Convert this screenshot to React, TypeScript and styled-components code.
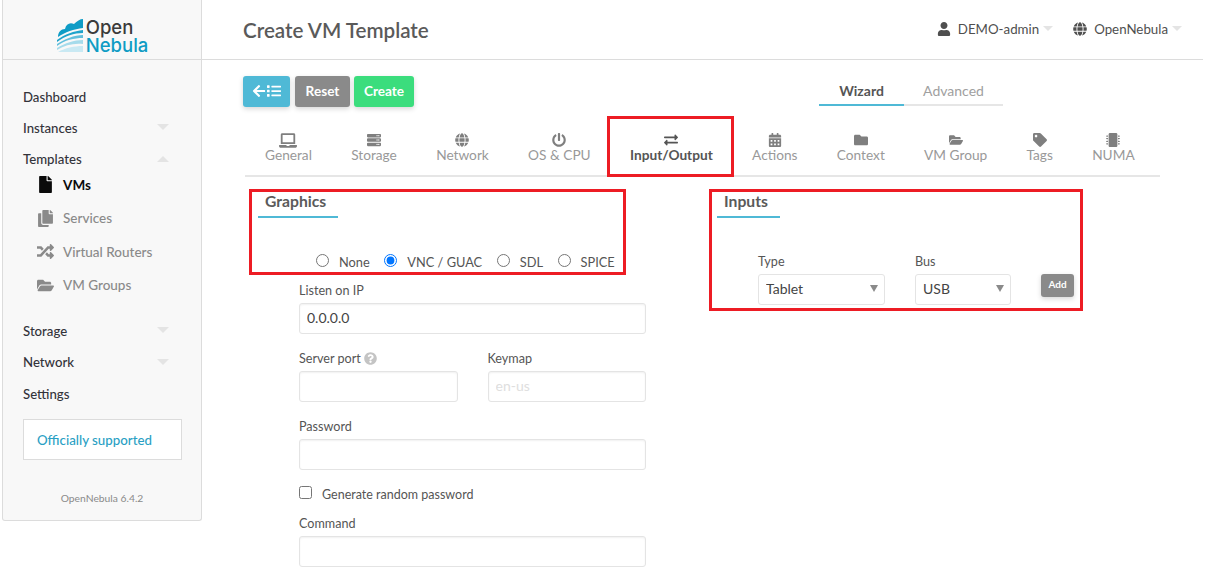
import styled, { createGlobalStyle } from "styled-components"
import {
	FaArrowLeft,
	FaCalendarAlt,
	FaCopy,
	FaExchangeAlt,
	FaFile,
	FaFolder,
	FaFolderOpen,
	FaGlobe,
	FaLaptop,
	FaList,
	FaMicrochip,
	FaPowerOff,
	FaQuestionCircle,
	FaRandom,
	FaServer,
	FaTag,
	FaUser
} from "react-icons/fa"

// Components //

export default function App() {
	return (
		<>
			<GlobalStyle />
			<Page>
				<Sidebar>
					<LogoBar>
						<LogoMark viewBox="0 0 27 33">
							<path
								d="M1 18 C1 13 4 10 8 10 C9 5 13 3 17 5 C20 2 23 0 26 0 L26 9 C17 10 8 13 1 18 Z"
								fill="#0e9cc6"
							/>
							<path d="M0 21 C8 15 17 12 26 11 L26 14 C17 14 8 17 0 23 Z" fill="#1fa3cb" />
							<path d="M0 25 C8 20 17 16 26 16 L26 19 C17 19 8 21 0 27 Z" fill="#62bfdc" />
							<path d="M0 29 C8 24 17 21 26 21 L26 25 C17 24 8 26 0 31 Z" fill="#a5dbeb" />
							<path d="M1 33 C8 29 17 27 26 27 L26 33 Z" fill="#c9e9f3" />
						</LogoMark>
						<LogoWords>
							<LogoOpen>Open</LogoOpen>
							<LogoNebula>Nebula</LogoNebula>
						</LogoWords>
					</LogoBar>
					<Nav>
						<NavItem>Dashboard</NavItem>
						<NavItem>
							Instances
							<Caret />
						</NavItem>
						<NavItem>
							Templates
							<Caret $up />
						</NavItem>
						<SubMenu>
							<SubItem $active>
								<SubIcon>
									<FaFile />
								</SubIcon>
								VMs
							</SubItem>
							<SubItem>
								<SubIcon>
									<FaCopy />
								</SubIcon>
								Services
							</SubItem>
							<SubItem>
								<SubIcon>
									<FaRandom />
								</SubIcon>
								Virtual Routers
							</SubItem>
							<SubItem>
								<SubIcon>
									<FaFolderOpen />
								</SubIcon>
								VM Groups
							</SubItem>
						</SubMenu>
						<NavItem>
							Storage
							<Caret />
						</NavItem>
						<NavItem>
							Network
							<Caret />
						</NavItem>
						<NavItem>Settings</NavItem>
					</Nav>
					<SupportBox>Officially supported</SupportBox>
					<Version>OpenNebula 6.4.2</Version>
				</Sidebar>

				<Main>
					<Header>
						<Title>Create VM Template</Title>
						<UserMenu>
							<UserEntry>
								<FaUser />
								DEMO-admin
								<SmallCaret />
							</UserEntry>
							<UserEntry>
								<FaGlobe />
								OpenNebula
								<SmallCaret />
							</UserEntry>
						</UserMenu>
					</Header>

					<Content>
						<Toolbar>
							<ButtonGroup>
								<ActionButton $color="#4fb9d6" $width={47}>
									<BackIcons>
										<FaArrowLeft />
										<FaList />
									</BackIcons>
								</ActionButton>
								<ActionButton $color="#8a8a8a" $width={55}>
									Reset
								</ActionButton>
								<CreateButton $color="#3bdd7d" $width={60}>
									Create
								</CreateButton>
							</ButtonGroup>
							<ModeTabs>
								<ModeTab $active $width={85}>
									Wizard
								</ModeTab>
								<ModeTab $width={99}>Advanced</ModeTab>
							</ModeTabs>
						</Toolbar>

						<TabBar>
							{tabs.map((tab) => (
								<Tab key={tab.label} $active={tab.active}>
									<TabIcon $active={tab.active}>{tab.icon}</TabIcon>
									{tab.label}
								</Tab>
							))}
						</TabBar>

						<FormColumns>
							<GraphicsColumn>
								<SectionTitle>Graphics</SectionTitle>
								<RadioRow>
									{radios.map((radio) => (
										<RadioLabel key={radio.label}>
											<input type="radio" name="graphics" defaultChecked={radio.checked} />
											<span>{radio.label}</span>
										</RadioLabel>
									))}
								</RadioRow>
								<Fields>
									<Field>
										<FieldLabel>Listen on IP</FieldLabel>
										<TextInput defaultValue="0.0.0.0" />
									</Field>
									<FieldPair>
										<Field>
											<FieldLabel>
												Server port <HelpIcon />
											</FieldLabel>
											<TextInput />
										</Field>
										<Field>
											<FieldLabel>Keymap</FieldLabel>
											<TextInput placeholder="en-us" />
										</Field>
									</FieldPair>
									<Field>
										<FieldLabel>Password</FieldLabel>
										<TextInput />
									</Field>
									<CheckRow>
										<input type="checkbox" />
										<span>Generate random password</span>
									</CheckRow>
									<Field>
										<FieldLabel>Command</FieldLabel>
										<TextInput />
									</Field>
								</Fields>
							</GraphicsColumn>

							<InputsColumn>
								<SectionTitle>Inputs</SectionTitle>
								<InputsRow>
									<InputField>
										<FieldLabel>Type</FieldLabel>
										<SelectWrap $width={127}>
											<Select defaultValue="Tablet">
												<option>Tablet</option>
												<option>Mouse</option>
											</Select>
										</SelectWrap>
									</InputField>
									<InputField>
										<FieldLabel>Bus</FieldLabel>
										<SelectWrap $width={96}>
											<Select defaultValue="USB">
												<option>USB</option>
												<option>PS2</option>
											</Select>
										</SelectWrap>
									</InputField>
									<AddButton>Add</AddButton>
								</InputsRow>
							</InputsColumn>
						</FormColumns>
					</Content>
				</Main>

				<Callout $left={607} $top={116} $width={127} $height={61} />
				<Callout $left={249} $top={189} $width={377} $height={86} />
				<Callout $left={709} $top={189} $width={374} $height={122} />
			</Page>
		</>
	)
}

// Styled Components //

const GlobalStyle = createGlobalStyle`
	html, body {
		margin: 0;
		height: 100%;
		background: #fff;
		overflow: hidden;
	}
	body {
		font-family: Lato, "Liberation Sans", sans-serif;
		font-size: 14px;
		color: #555;
	}
	* {
		box-sizing: border-box;
	}
`

const Page = styled.div`
	position: relative;
	display: flex;
	align-items: flex-start;
	width: 1205px;
	height: 578px;
	padding: 0 2px;
	overflow: hidden;
`

const Sidebar = styled.aside`
	flex: none;
	width: 200px;
	height: 521px;
	display: flex;
	flex-direction: column;
	background: #f8f8f8;
	border: 1px solid #dcdcdc;
	border-top: 0;
	border-radius: 0 0 3px 3px;
`

const LogoBar = styled.div`
	height: 60px;
	display: flex;
	align-items: flex-start;
	justify-content: center;
	gap: 2px;
	padding: 19px 0 0 1px;
	border-bottom: 1px solid #dcdcdc;
`

const LogoMark = styled.svg`
	width: 27px;
	height: 33px;
`

const LogoWords = styled.div`
	display: flex;
	flex-direction: column;
	font-family: Inter, sans-serif;
	font-size: 18.5px;
	line-height: 18px;
	font-weight: 500;
	margin-top: -1px;
`

const LogoOpen = styled.span`
	color: #3b3b3b;
`

const LogoNebula = styled.span`
	color: #0f9cc4;
`

const Nav = styled.nav`
	padding-top: 21px;
	display: flex;
	flex-direction: column;
`

const NavItem = styled.div`
	position: relative;
	height: 31.3px;
	padding-left: 20px;
	display: flex;
	align-items: center;
	font-size: 13.2px;
	font-weight: 500;
	color: #33333a;
`

const Caret = styled.span<{ $up?: boolean }>`
	position: absolute;
	right: 32px;
	top: 12px;
	width: 0;
	height: 0;
	border-left: 6px solid transparent;
	border-right: 6px solid transparent;
	${({ $up }) => ($up ? "border-bottom: 6px solid #e4e4e4;" : "border-top: 6px solid #e4e4e4;")}
`

const SubMenu = styled.div`
	display: flex;
	flex-direction: column;
	margin-top: -7px;
	margin-bottom: 13px;
`

const SubItem = styled.div<{ $active?: boolean }>`
	height: 33.6px;
	padding-left: 33px;
	display: flex;
	align-items: center;
	gap: 8px;
	font-size: 13.5px;
	font-weight: ${({ $active }) => ($active ? 700 : 500)};
	color: ${({ $active }) => ($active ? "#0a0a0a" : "#8a8a8a")};
`

const SubIcon = styled.span`
	width: 19px;
	display: flex;
	justify-content: center;
	svg {
		width: auto;
		height: 17px;
	}
`

const SupportBox = styled.div`
	margin: 10px 19px 0 20px;
	height: 41px;
	padding-left: 13px;
	display: flex;
	align-items: center;
	background: #fff;
	border: 1px solid #dcdcdc;
	font-size: 13.3px;
	font-weight: 500;
	color: #2a9fc4;
`

const Version = styled.div`
	margin-top: 32px;
	text-align: center;
	font-size: 10.3px;
	color: #8a8a8a;
`

const Main = styled.main`
	flex: 1;
	min-width: 0;
	display: flex;
	flex-direction: column;
`

const Header = styled.header`
	height: 60px;
	display: flex;
	align-items: center;
	justify-content: space-between;
	padding: 0 21px 0 41px;
	border-bottom: 1px solid #dcdcdc;
`

const Title = styled.h1`
	margin: 0;
	font-size: 20.6px;
	font-weight: 600;
	color: #5a5a5a;
`

const UserMenu = styled.div`
	margin-top: -2px;
	display: flex;
	align-items: center;
	gap: 20px;
`

const UserEntry = styled.div`
	display: flex;
	align-items: center;
	gap: 7px;
	font-size: 13.3px;
	color: #4f4f4f;
	svg {
		width: auto;
		height: 14px;
	}
`

const SmallCaret = styled.span`
	width: 0;
	height: 0;
	margin-left: -3px;
	border-left: 5px solid transparent;
	border-right: 5px solid transparent;
	border-top: 5px solid #e4e4e4;
`

const Content = styled.div`
	padding: 16px 43px 0 41px;
`

const Toolbar = styled.div`
	height: 31px;
	display: flex;
	align-items: flex-start;
	justify-content: space-between;
	padding-right: 157px;
`

const ButtonGroup = styled.div`
	display: flex;
	gap: 5px;
`

const ActionButton = styled.button<{ $color: string; $width: number }>`
	width: ${({ $width }) => $width}px;
	height: 31px;
	padding: 0 0 1px;
	display: flex;
	align-items: center;
	justify-content: center;
	border: 0;
	border-radius: 3px;
	background: ${({ $color }) => $color};
	box-shadow: 0 2px 5px rgba(0, 0, 0, 0.16);
	font-family: inherit;
	font-size: 13.6px;
	font-weight: 700;
	color: #fff;
`

const CreateButton = styled(ActionButton)`
	margin-left: -1px;
`

const BackIcons = styled.span`
	display: flex;
	align-items: center;
	gap: 1px;
	font-size: 14px;
`

const ModeTabs = styled.div`
	display: flex;
	height: 30px;
`

const ModeTab = styled.div<{ $active?: boolean; $width: number }>`
	width: ${({ $width }) => $width}px;
	padding-top: 6px;
	text-align: center;
	font-weight: ${({ $active }) => ($active ? 700 : 400)};
	color: ${({ $active }) => ($active ? "#555" : "#a0a0a0")};
	border-bottom: 2px solid ${({ $active }) => ($active ? "#4fb9d6" : "#e6e6e6")};
`

const TabBar = styled.div`
	margin-top: 23px;
	margin-left: 2px;
	height: 47px;
	display: flex;
	padding: 3px 0 0 0.35px;
	border-bottom: 2px solid #e6e6e6;
`

const Tab = styled.div<{ $active?: boolean }>`
	flex: none;
	padding: 0 19.65px;
	display: flex;
	flex-direction: column;
	align-items: center;
	white-space: nowrap;
	font-size: 13.7px;
	line-height: 15px;
	font-weight: ${({ $active }) => ($active ? 700 : 400)};
	color: ${({ $active }) => ($active ? "#555" : "#999")};
`

const TabIcon = styled.span<{ $active?: boolean }>`
	height: 14px;
	display: flex;
	align-items: center;
	color: ${({ $active }) => ($active ? "#555" : "#7f7f7f")};
	svg {
		flex: none;
		width: auto;
		height: 14px;
	}
`

const LaptopIcon = styled(FaLaptop)`
	&& {
		width: 18px;
		height: 15px;
	}
`

const FormColumns = styled.div`
	display: flex;
	margin-top: 14px;
	margin-left: 15px;
`

const GraphicsColumn = styled.section`
	flex: none;
	width: 459px;
`

const InputsColumn = styled.section`
	flex: none;
	width: 380px;
`

const SectionTitle = styled.h2`
	display: table;
	margin: 0;
	height: 27px;
	padding: 1px 12px 0 7px;
	font-size: 15.7px;
	line-height: 19px;
	font-weight: 700;
	color: #5a5a5a;
	border-bottom: 2px solid #4fb9d6;
`

const RadioRow = styled.div`
	margin-top: 34px;
	padding-left: 58px;
	height: 17px;
	display: flex;
	gap: 14.6px;
`

const RadioLabel = styled.label`
	display: flex;
	align-items: center;
	gap: 10px;
	font-size: 12.8px;
	color: #555;
	input {
		margin: 0;
		width: 13px;
		height: 13px;
	}
	span {
		padding-top: 2px;
	}
`

const Fields = styled.div`
	margin-top: 14px;
	margin-left: 41px;
	width: 347px;
	display: flex;
	flex-direction: column;
	gap: 17px;
`

const Field = styled.div`
	flex: 1;
	display: flex;
	flex-direction: column;
`

const InputField = styled.div`
	flex: none;
	display: flex;
	flex-direction: column;
`

const FieldPair = styled.div`
	display: flex;
	gap: 30px;
`

const FieldLabel = styled.label`
	height: 15px;
	margin-bottom: 5px;
	display: flex;
	align-items: center;
	gap: 3px;
	font-size: 12.6px;
	color: #555;
`

const HelpIcon = styled(FaQuestionCircle)`
	font-size: 13px;
	color: #c4c4c4;
`

const TextInput = styled.input`
	width: 100%;
	height: 31px;
	padding: 0 7px 2px;
	border: 1px solid #e4e4e4;
	border-radius: 3px;
	box-shadow: inset 0 1px 2px rgba(0, 0, 0, 0.06);
	font-family: inherit;
	font-size: 14px;
	color: #444;
	outline: none;
	&::placeholder {
		color: #dedede;
	}
`

const CheckRow = styled.label`
	margin: -2px 0 -1px;
	height: 15px;
	display: flex;
	align-items: center;
	gap: 10px;
	font-size: 12.5px;
	color: #555;
	input {
		margin: 0;
		width: 13px;
		height: 13px;
	}
	span {
		padding-top: 3px;
	}
`

const InputsRow = styled.div`
	margin-top: 36px;
	margin-left: 41px;
	display: flex;
	align-items: flex-start;
	gap: 30px;
`

const SelectWrap = styled.div<{ $width: number }>`
	position: relative;
	width: ${({ $width }) => $width}px;
	&::after {
		content: "";
		position: absolute;
		right: 7px;
		top: 11px;
		border-left: 4px solid transparent;
		border-right: 4px solid transparent;
		border-top: 7px solid #8a8a8a;
	}
`

const Select = styled.select`
	appearance: none;
	display: block;
	width: 100%;
	height: 31px;
	padding: 0 7px 2px;
	background: #fff;
	border: 1px solid #e4e4e4;
	border-radius: 3px;
	font-family: inherit;
	font-size: 14px;
	color: #444;
`

const AddButton = styled.button`
	flex: none;
	align-self: flex-start;
	width: 33px;
	height: 23px;
	margin-top: 20px;
	padding: 0 0 3px;
	border: 0;
	border-radius: 3px;
	background: #8a8a8a;
	box-shadow: 0 2px 5px rgba(0, 0, 0, 0.16);
	font-family: inherit;
	font-size: 10px;
	font-weight: 700;
	color: #fff;
`

const Callout = styled.div<{ $left: number; $top: number; $width: number; $height: number }>`
	position: absolute;
	left: ${({ $left }) => $left}px;
	top: ${({ $top }) => $top}px;
	width: ${({ $width }) => $width}px;
	height: ${({ $height }) => $height}px;
	border: 3px solid #ed1c24;
	pointer-events: none;
`

// Data //

const tabs = [
	{ label: "General", icon: <LaptopIcon /> },
	{ label: "Storage", icon: <FaServer /> },
	{ label: "Network", icon: <FaGlobe /> },
	{ label: "OS & CPU", icon: <FaPowerOff /> },
	{ label: "Input/Output", icon: <FaExchangeAlt />, active: true },
	{ label: "Actions", icon: <FaCalendarAlt /> },
	{ label: "Context", icon: <FaFolder /> },
	{ label: "VM Group", icon: <FaFolderOpen /> },
	{ label: "Tags", icon: <FaTag /> },
	{ label: "NUMA", icon: <FaMicrochip /> }
]

const radios = [
	{ label: "None" },
	{ label: "VNC / GUAC", checked: true },
	{ label: "SDL" },
	{ label: "SPICE" }
]
